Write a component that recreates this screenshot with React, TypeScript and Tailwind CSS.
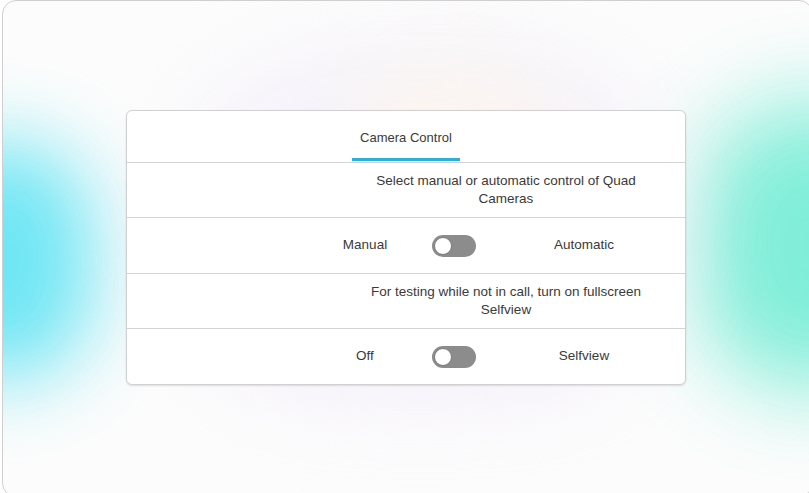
import React from "react";

const font = { fontFamily: '"Liberation Sans", Arial, sans-serif' };

function Toggle() {
  return (
    <div className="w-[44px] h-[22px] rounded-full bg-[#8c8c8c] flex items-center px-[2px]">
      <div className="w-[18px] h-[18px] rounded-full bg-white border border-[#7a7a7a]" />
    </div>
  );
}

function SwitchRow({ left, right, tall }: { left: string; right: string; tall?: boolean }) {
  return (
    <div className={`${tall ? "h-[56px]" : "h-[55px]"} flex items-center border-t border-[#d4d4d4]`}>
      <div className="w-[199px] shrink-0" />
      <div className="w-[78px] shrink-0 text-center">{left}</div>
      <div className="ml-[28px] shrink-0">
        <Toggle />
      </div>
      <div className="w-[200px] shrink-0 ml-[8px] text-center">{right}</div>
    </div>
  );
}

function TextRow({ children, tall }: { children: React.ReactNode; tall?: boolean }) {
  return (
    <div className={`${tall ? "h-[56px]" : "h-[55px]"} flex items-center border-t border-[#d4d4d4]`}>
      <div className="w-[200px] shrink-0" />
      <div className="w-[358px] shrink-0 px-[33px] text-center leading-[18px]">{children}</div>
    </div>
  );
}

export default function App() {
  return (
    <div className="w-[809px] h-[493px] overflow-hidden bg-white" style={font}>
      <div className="relative ml-[2px] w-[811px] h-[497px] rounded-[14px] border border-[#cfcfcf] bg-[#fcfcfc] overflow-hidden">
        {/* background glows */}
        <div className="absolute left-[-90px] top-[140px] w-[180px] h-[240px] rounded-full bg-[#5fe3f3] blur-[40px] opacity-90" />
        <div className="absolute left-[690px] top-[100px] w-[240px] h-[290px] rounded-full bg-[#72ecd4] blur-[45px] opacity-90" />
        <div className="absolute left-[160px] top-[50px] w-[520px] h-[360px] rounded-full bg-[#f3eefa] blur-[40px] opacity-70" />
        <div className="absolute left-[340px] top-[70px] w-[220px] h-[200px] rounded-full bg-[#fdf6ea] blur-[40px] opacity-80" />

        <div className="relative mt-[109px] ml-[123px] w-[560px] bg-white border border-[#d0d0d0] rounded-[6px] shadow-[0_1px_2px_rgba(0,0,0,0.12)] text-[13.5px] text-[#3a3a3a]">
          <div className="h-[51px] flex justify-center">
            <div className="w-[108px] flex flex-col items-center">
              <div className="mt-[17px] text-[13px]">Camera Control</div>
              <div className="mt-auto mb-[1px] w-full h-[3px] bg-[#2bb0d6]" />
            </div>
          </div>
          <TextRow>Select manual or automatic control of Quad Cameras</TextRow>
          <SwitchRow left="Manual" right="Automatic" tall />
          <TextRow>For testing while not in call, turn on fullscreen Selfview</TextRow>
          <SwitchRow left="Off" right="Selfview" tall />
        </div>
      </div>
    </div>
  );
}
